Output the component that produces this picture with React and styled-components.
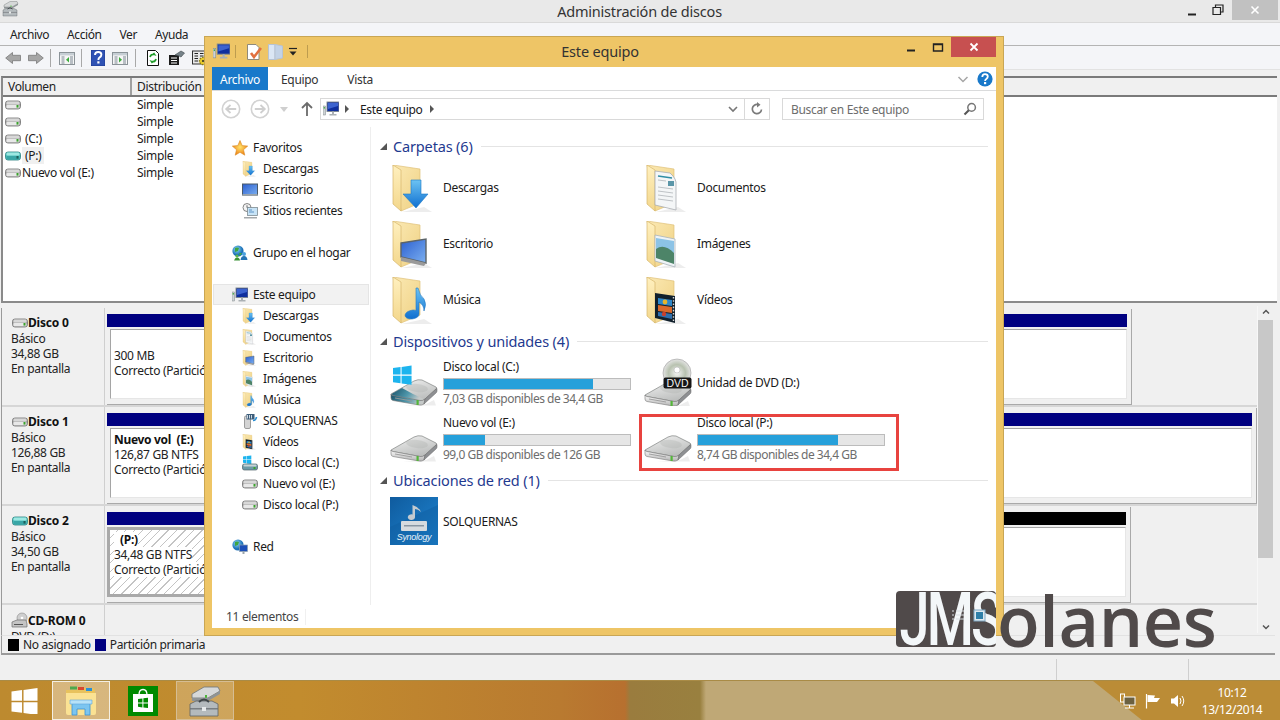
import React from 'react';
import styled, { createGlobalStyle } from 'styled-components';

const FONT = `"Noto Sans", "Open Sans", "Liberation Sans", sans-serif`;

const Global = createGlobalStyle`
  html, body { margin: 0; padding: 0; background: #f0f0f0; }
  body { font-family: ${FONT}; font-size: 12px; color: #1a1a1a; letter-spacing: -0.32px; }
  *, *::before, *::after { box-sizing: border-box; }
`;

const Screen = styled.div`
  position: relative; width: 1280px; height: 720px; overflow: hidden;
  display: flex; flex-direction: column;
`;
const HiddenSvg = styled.svg`position: absolute; width: 0; height: 0;`;

/* ---------- Disk management window ---------- */
const Mmc = styled.div`height: 680px; display: flex; flex-direction: column; background: #f0f0f0;`;
const TitleBar = styled.div`
  position: relative; height: 23px; flex: none; background: #e9e9e9; border-bottom: 1px solid #d9d9d9;
  display: flex; align-items: flex-start; padding-left: 2px;
`;
const TitleText = styled.div`
  flex: 1; text-align: center; font-size: 14.5px; line-height: 23px; color: #333; padding-left: 80px; letter-spacing: -0.2px;
`;
const WinButtons = styled.div`display: flex; align-items: flex-start; height: 21px; padding-right: 2px;`;
const WinBtn = styled.div`
  width: ${p => p.$w || 24}px; height: ${p => p.$h || 20}px; display: flex; align-items: center; justify-content: center;
  background: ${p => p.$bg || 'transparent'};
`;
const MenuBar = styled.div`
  height: 23px; flex: none; background: #f4f5f8; border-bottom: 1px solid #b4b4b4;
  display: flex; align-items: center; padding-left: 10px; gap: 18px; font-size: 12px; color: #222; letter-spacing: -0.42px;
`;
const ToolBar = styled.div`
  height: 24px; flex: none; background: #f4f5f8; border-bottom: 1px solid #e2e2e2;
  display: flex; align-items: center; padding-left: 5px; gap: 7px;
`;
const ToolSep = styled.div`width: 1px; height: 18px; background: #a8a8a8; margin: 0 ${p => p.$r}px 0 ${p => p.$l}px;`;
const Gap = styled.div`height: 6px; flex: none;`;

const VolumeList = styled.div`
  height: 227px; flex: none; margin: 0 3px 0 1px; background: #fff;
  border-top: 2px solid #7a7a7a; border-left: 2px solid #8a8a8a; border-bottom: 2px solid #8a8a8a;
  display: flex; flex-direction: column; overflow: hidden;
`;
const VolHeader = styled.div`
  height: 19px; flex: none; display: flex; background: #f0f0f0; border-bottom: 2px solid #7a7a7a; line-height: 18px; color: #222;
`;
const VolHeadCell = styled.div`
  width: ${p => p.$w}px; padding-left: 5px; border-right: ${p => (p.$last ? 'none' : '2px solid #a0a0a0')};
`;
const VolBody = styled.div`margin-top: -1px;`;
const VolRow = styled.div`height: 17px; display: flex; align-items: center; color: #1a1a1a;`;
const VolName = styled.div`
  width: 134px; padding-left: 2px; display: flex; align-items: center; gap: 1px; flex: none;
`;
const VolLabel = styled.span`
  padding: 0 ${p => p.$pad}px; line-height: 17px; background: ${p => (p.$sel ? '#f0f0f0' : 'transparent')};
`;

const DiskPane = styled.div`
  flex: 1; min-height: 0; display: flex; padding-top: 5px; overflow: hidden; background: #f0f0f0;
  margin-left: 1px;
`;
const DiskRows = styled.div`flex: 1; min-width: 0; overflow: hidden; border-left: 1px solid #9a9a9a;`;
const DiskRow = styled.div`
  height: ${p => p.$h || 99}px; display: flex; border-bottom: 2px solid #d6d6d6;
`;
const DiskInfo = styled.div`
  width: 103px; flex: none; padding: 7px 0 0 9px; line-height: 15px; color: #222; border-right: 1px solid #cfcfcf; position: relative;
`;
const DiskName = styled.div`
  display: flex; align-items: center; font-weight: 700; padding-left: 1px; color: #111; line-height: 16px; letter-spacing: -0.2px;
`;
const DiskArea = styled.div`flex: 1; min-width: 0; padding: 1px 0 0 2px; background: #f0f0f0;`;
const DiskCard = styled.div`
  display: flex; width: ${p => p.$w}px; height: 96px; padding: 5px 4px 5px 0;
  border-right: 1px solid #a9a9a9; border-bottom: 1px solid #a9a9a9;
`;
const Partition = styled.div`flex: ${p => p.$grow || 1} 1 0; min-width: 0; display: flex; flex-direction: column; position: relative;`;
const PartBar = styled.div`height: 13px; flex: none; background: ${p => p.$c};`;
const PartBody = styled.div`
  flex: 1; margin: 2px 0 0 ${p => (p.$sel ? 0 : 3)}px; padding: ${p => (p.$sel ? 2 : 3)}px 0 0 ${p => (p.$sel ? 4 : 3)}px;
  overflow: hidden; white-space: pre; line-height: 15px; color: #222;
  border: ${p => (p.$sel ? '3px solid #a9a9a9' : '1px solid #a5a5a5')};
  border-right-color: ${p => (p.$sel ? '#a9a9a9' : '#e6e6e6')};
  border-bottom-color: ${p => (p.$sel ? '#a9a9a9' : '#e6e6e6')};
  background: ${p => (p.$sel ? 'repeating-linear-gradient(135deg, #fff 0 5px, #c4c4c4 5px 6px)' : '#fff')};
`;
const PartLine = styled.div`
  height: 15px; width: fit-content; background: ${p => (p.$sel ? '#fff' : 'transparent')};
  font-weight: ${p => (p.$bold ? 700 : 400)}; padding-left: ${p => p.$indent || 0}px; color: ${p => (p.$bold ? '#111' : '#222')};
`;
const ScrollBar = styled.div`
  width: 23px; flex: none; display: flex; flex-direction: column; align-items: flex-start; margin: -2px 0 2px; padding-right: 6px;
  border-left: 1px solid #f7f7f7;
`;
const ScrollArrow = styled.div`height: 12px; width: 16px; display: flex; align-items: center; justify-content: center; flex: none;`;
const ScrollThumb = styled.div`height: 238px; width: 15px; background: #c8c8c8; margin-top: 2px; flex: none;`;
const ScrollFill = styled.div`flex: 1;`;

const Legend = styled.div`
  height: 20px; flex: none; margin: 0 5px 0 1px; display: flex; align-items: center; padding: 0 0 0 6px; gap: 4px;
  border-left: 1px solid #9a9a9a; border-top: 1px solid #e2e2e2; border-bottom: 2px solid #9a9a9a; color: #222;
`;
const Swatch = styled.div`width: 11px; height: 12px; background: ${p => p.$c};`;
const StatusBar = styled.div`height: 25px; flex: none; display: flex; padding: 4px 0 0 0; justify-content: flex-end;`;
const StatusCell = styled.div`width: ${p => p.$w}px; border-left: 1px solid #cfcfcf;`;

/* ---------- Taskbar ---------- */
const Taskbar = styled.div`
  height: 40px; flex: none; position: relative; display: flex; align-items: center;
  background: linear-gradient(90deg, #bd8a2f 0, #c28c2e 300px, #b97a30 560px, #b7702f 625px, #9a7c3e 630px, #99803f 700px, #bfa876 706px, #bfa876 1280px);
  border-top: 1px solid #a98b46;
  &::before {
    content: ''; position: absolute; inset: 0; background: #bb8c36;
    clip-path: polygon(1093px 0, 1280px 0, 1280px 40px, 1143px 40px);
  }
`;
const StartSlot = styled.div`width: 52px; height: 100%; display: flex; align-items: center; justify-content: center; padding-right: 3px;`;
const TaskBtn = styled.div`
  width: 58px; height: 39px; display: flex; align-items: center; justify-content: center;
  background: ${p => (p.$active ? 'rgba(255,255,255,0.38)' : 'rgba(255,255,255,0.22)')};
  border: 1px solid ${p => (p.$active ? '#f4efe3' : '#d6bd93')};
`;
const StoreSlot = styled.div`width: 66px; display: flex; align-items: center; justify-content: center;`;
const Tray = styled.div`
  position: relative; margin-left: auto; display: flex; align-items: center; height: 100%; gap: 9px; padding-right: 6px;
`;
const Clock = styled.div`
  width: 84px; text-align: center; color: #fff; font-size: 12px; line-height: 17px; margin-left: -5px;
`;

/* ---------- Explorer window ---------- */
const Explorer = styled.div`
  position: absolute; left: 204px; top: 36px; width: 800px; height: 600px; display: flex; flex-direction: column;
  background: #eec566; border: 1px solid #c9a654; padding: 0 7px 7px;
`;
const ExTitle = styled.div`height: 30px; flex: none; display: flex; align-items: flex-start; position: relative;`;
const Qat = styled.div`display: flex; align-items: center; height: 29px; padding-left: 1px; width: 300px;`;
const QatSlot = styled.div`display: flex; flex: none; margin-left: ${p => p.$ml || 0}px;`;
const QatSep = styled.div`width: 1px; height: 13px; background: #bd9c4f; flex: none; margin-left: ${p => p.$ml}px;`;
const ExTitleText = styled.div`
  position: absolute; left: 0; right: 0; text-align: center; font-size: 14.5px; line-height: 29px; color: #333; letter-spacing: -0.2px; padding-right: 8px;
`;
const ExBtns = styled.div`margin-left: auto; display: flex; position: relative; align-items: flex-start;`;
const ExInner = styled.div`flex: 1; min-height: 0; background: #fff; display: flex; flex-direction: column;`;
const Ribbon = styled.div`
  height: 24px; flex: none; display: flex; border-bottom: 1px solid #dadbdc; align-items: stretch; padding-right: 3px;
`;
const RibbonFile = styled.div`
  width: 56px; background: #1979ca; color: #fff; display: flex; align-items: center; justify-content: center; font-size: 12px; height: 23px; padding-top: 1px;
`;
const RibbonTab = styled.div`
  display: flex; align-items: center; color: #333; margin-left: ${p => p.$ml}px; font-size: 12px; padding-top: 1px;
`;
const RibbonRight = styled.div`margin-left: auto; display: flex; align-items: center; gap: 8px;`;
const AddressRow = styled.div`height: 36px; flex: none; display: flex; align-items: center; padding: 0 12px 0 9px;`;
const NavCircle = styled.div`width: 20px; height: 20px; margin-right: ${p => p.$mr}px; display: flex;`;
const NavCaret = styled.div`
  width: 0; height: 0; border-left: 4px solid transparent; border-right: 4px solid transparent; border-top: 5px solid #cfcfcf; margin: 1px 11px 0 0;
`;
const UpArrow = styled.div`width: 16px; height: 16px; margin-right: 5px; display: flex;`;
const AddressBox = styled.div`
  width: 450px; height: 22px; border: 1px solid #d9d9d9; display: flex; align-items: center; margin-right: 12px;
`;
const Crumb = styled.div`flex: 1; display: flex; align-items: center; padding-left: 2px; color: #1a1a1a; font-size: 12px;`;
const CrumbArrow = styled.div`
  width: 0; height: 0; border-top: 4px solid transparent; border-bottom: 4px solid transparent; border-left: 4px solid ${p => p.$c || '#555'};
  margin: ${p => p.$m};
`;
const AddrEnd = styled.div`
  width: ${p => p.$w}px; height: 100%; display: flex; align-items: center; justify-content: center; border-left: ${p => (p.$line ? '1px solid #d9d9d9' : 'none')};
`;
const SearchBox = styled.div`
  flex: 1; height: 22px; border: 1px solid #d9d9d9; display: flex; align-items: center; justify-content: space-between;
  padding: 0 6px 0 8px; color: #6d6d6d; font-size: 12px;
`;
const ExBody = styled.div`flex: 1; min-height: 0; display: flex;`;
const NavPane = styled.div`
  width: 159px; flex: none; padding: 10px 1px 0 1px; border-right: 1px solid #eeeeee; margin-bottom: 1px;
`;
const NavGroup = styled.div`margin-bottom: 21px;`;
const NavItem = styled.div`
  height: 21px; display: flex; align-items: center; padding-left: ${p => (p.$top ? 18 : 28)}px; gap: 5px; color: #1a1a1a;
  border: 1px solid ${p => (p.$sel ? '#e5e5e5' : 'transparent')}; background: ${p => (p.$sel ? '#f2f2f2' : 'transparent')};
`;
const Content = styled.div`flex: 1; min-width: 0; padding: 9px 0 0 9px;`;
const GroupHead = styled.div`
  height: 20px; display: flex; align-items: center; margin: ${p => p.$mt || 0}px 0 ${p => p.$mb}px; padding-right: 8px;
`;
const GroupCaret = styled.div`
  width: 0; height: 0; border-style: solid; border-width: 0 0 7px 7px; border-color: transparent transparent #555 transparent; margin: 1px 6px 0 0;
`;
const GroupTitle = styled.div`font-size: 14.5px; color: #1f3a8f; letter-spacing: -0.15px; white-space: nowrap;`;
const GroupRule = styled.div`flex: 1; height: 1px; background: #e4e4e4; margin-left: 8px; margin-top: 1px;`;
const Tiles = styled.div`
  display: grid; grid-template-columns: 254px 254px; grid-auto-rows: ${p => p.$row}px; margin-left: 10px;
`;
const Tile = styled.div`
  position: relative; display: flex; align-items: ${p => (p.$center ? 'center' : 'flex-start')}; height: 48px; gap: 5px; color: #1a1a1a;
  ${p => p.$marked && `
    &::after { content: ''; position: absolute; left: -5px; top: 0; width: 260px; height: 57px; border: 3px solid #e8433f; pointer-events: none; }
  `}
`;
const TileLabel = styled.div`padding: ${p => p.$pt || 0}px 0 ${p => p.$pb || 0}px; line-height: 16px; white-space: nowrap;`;
const DriveInfo = styled.div`display: flex; flex-direction: column; padding-top: 1px; line-height: 16px;`;
const DriveBar = styled.div`
  width: 188px; height: 12px; background: #e6e6e6; border: 1px solid #bcbcbc; margin: 3px 0 1px;
`;
const DriveFill = styled.div`height: 100%; background: #26a0da;`;
const DriveSub = styled.div`color: #6d6d6d; white-space: nowrap; letter-spacing: -0.5px;`;
const ExStatus = styled.div`
  height: 22px; flex: none; display: flex; align-items: center; padding-left: 14px; color: #444;
`;
const StatusText = styled.div`width: 80px; border-right: 1px solid #f0f0f0; line-height: 16px;`;

/* ---------- Watermark ---------- */
const Watermark = styled.div`
  position: absolute; left: 896px; top: 591px; display: flex; align-items: flex-start; height: 56px;
  font-family: "Open Sans", "Noto Sans", sans-serif; letter-spacing: 0; pointer-events: none;
`;
const LogoBox = styled.div`
  position: relative; width: 100px; height: 56px; background: #504a4a; border-radius: 4px; overflow: hidden; flex: none;
`;
const LogoLetters = styled.div`
  font-family: Roboto, "Liberation Sans", sans-serif; color: #f3f7f9; font-size: 75px; line-height: 56px; height: 56px; font-weight: 500;
  letter-spacing: -4px; padding-left: 5px; white-space: nowrap; transform: scaleX(0.72); transform-origin: 0 50%; width: 140px;
`;
const LogoIcons = styled.svg`position: absolute; left: 55px; top: 18px;`;
const LogoRest = styled.div`
  color: #504a4a; font-size: 70px; line-height: 58px; font-weight: 600; margin-left: 1px; letter-spacing: -0.4px;
`;

/* ---------- Icons ---------- */
const Gradients = () => (
  <HiddenSvg>
    <defs>
      <linearGradient id="gTop" x1="0" y1="0" x2="0.5" y2="1"><stop offset="0" stopColor="#f2f2f2" /><stop offset="1" stopColor="#bdbfbe" /></linearGradient>
      <linearGradient id="gFront" x1="0" y1="0" x2="0" y2="1"><stop offset="0" stopColor="#fcfcfc" /><stop offset="1" stopColor="#b4b4b4" /></linearGradient>
      <linearGradient id="gOs" x1="0" y1="0" x2="1" y2="0.3"><stop offset="0" stopColor="#174f66" /><stop offset="0.6" stopColor="#4f97ab" /><stop offset="1" stopColor="#c5c9c8" /></linearGradient>
      <linearGradient id="gBack" x1="0" y1="0" x2="1" y2="1"><stop offset="0" stopColor="#fbe9b4" /><stop offset="1" stopColor="#efd183" /></linearGradient>
      <linearGradient id="gFlap" x1="0" y1="0" x2="0" y2="1"><stop offset="0" stopColor="#fff0bf" /><stop offset="1" stopColor="#f3d78c" /></linearGradient>
      <linearGradient id="gBlue" x1="0" y1="0" x2="0" y2="1"><stop offset="0" stopColor="#6cc3f3" /><stop offset="1" stopColor="#0f6fd0" /></linearGradient>
      <linearGradient id="gScreen" x1="0" y1="0" x2="1" y2="1"><stop offset="0" stopColor="#2b5fd0" /><stop offset="1" stopColor="#7cb0f0" /></linearGradient>
      <linearGradient id="gSyn" x1="0" y1="0" x2="1" y2="1"><stop offset="0" stopColor="#0f5b9e" /><stop offset="1" stopColor="#1f86d2" /></linearGradient>
      <radialGradient id="gDisc"><stop offset="0" stopColor="#f6f6f6" /><stop offset="0.6" stopColor="#b8c2b0" /><stop offset="1" stopColor="#e4e4e4" /></radialGradient>
      <radialGradient id="gGlobe" cx="0.4" cy="0.35"><stop offset="0" stopColor="#8fdcf5" /><stop offset="1" stopColor="#1c70b8" /></radialGradient>
      <radialGradient id="gStar" cx="0.5" cy="0.45"><stop offset="0" stopColor="#ffe36b" /><stop offset="1" stopColor="#f08a1d" /></radialGradient>
    </defs>
  </HiddenSvg>
);

const Overlay = ({ kind }) => {
  switch (kind) {
    case 'down':
      return <path d="M21 15 H31 V29 H38 L26 43 L13 29 H21 Z" fill="url(#gBlue)" stroke="#1b78c8" strokeWidth="0.6" />;
    case 'doc':
      return (
        <g>
          <path d="M11 6 L26 8 Q33 14 32 20 L32 45 L11 40 Z" fill="#f4f6f7" stroke="#a9adb2" strokeWidth="0.8" />
          <path d="M14 11 L28 13" stroke="#2f8da5" strokeWidth="1.6" />
          <path d="M14 15 L22 16 M14 22 L29 24 M14 26 L29 28 M14 30 L29 32 M14 34 L29 36" stroke="#b8bcc0" strokeWidth="0.9" />
          <rect x="24" y="16" width="6" height="5" fill="#5b96a8" />
        </g>
      );
    case 'screen':
      return (
        <g>
          <path d="M11 22 L36 18 V42 L11 36 Z" fill="url(#gScreen)" stroke="#5c6468" strokeWidth="1.4" />
          <path d="M11 36 L36 42 L34 45 L11 40 Z" fill="#9a9a9a" />
        </g>
      );
    case 'pic':
      return (
        <g>
          <path d="M11 14 L31 18 V46 L11 40 Z" fill="#eef3f6" stroke="#aab4bb" strokeWidth="0.8" />
          <path d="M12 17 L30 20 V32 L12 28 Z" fill="#8cc3e6" />
          <path d="M12 28 Q20 22 30 32 V43 L12 37 Z" fill="#4d8468" />
        </g>
      );
    case 'note':
      return (
        <g fill="url(#gBlue)" stroke="#2379c4" strokeWidth="0.6">
          <path d="M26 11 L28 11 Q30 19 34 22 Q37 27 34 34 Q34 28 29 25 L29 37 Q29 41 22 42 Q15 42 15 38 Q16 34 23 33 Q25 33 26 33.5 Z" />
        </g>
      );
    case 'film':
      return (
        <g>
          <path d="M11 16 L31 19 V46 L11 41 Z" fill="#11202c" />
          <path d="M14 21 L28 23 V29 L14 27 Z" fill="#2e87c9" />
          <path d="M14 28 L28 30 V36 L14 34 Z" fill="#d9692b" />
          <path d="M14 35 L28 37 V42 L14 39 Z" fill="#2f6fae" />
          <circle cx="21" cy="25" r="2.4" fill="#e6b52c" />
          <circle cx="20" cy="37" r="2.2" fill="#c9402f" />
          <path d="M29.5 20 V45" stroke="#d7d7d7" strokeWidth="1.4" strokeDasharray="1.6 1.6" />
        </g>
      );
    default:
      return null;
  }
};

const Folder = ({ size = 48, kind }) => (
  <svg width={size} height={size} viewBox="0 0 48 48" style={{ flex: 'none' }}>
    <path d="M12 47 L34 42 L42 47 Z" fill="#d8d8d8" opacity="0.45" />
    <path d="M3 0 L30 4 V38 L11 46 Z" fill="url(#gBack)" stroke="#e0c27a" strokeWidth="0.7" />
    <path d="M3 0 L11 5 V46 L3 39 Z" fill="url(#gFlap)" stroke="#d6b66c" strokeWidth="0.7" />
    <Overlay kind={kind} />
  </svg>
);

const WinLogo = ({ x, y, s, c = '#1db4ee' }) => (
  <g transform={`translate(${x} ${y}) scale(${s})`} fill={c}>
    <path d="M0 1.4 L6.5 .5 V7 H0 Z M7.4 .4 L16 -.8 V7 H7.4 Z M0 8 H6.5 V14.5 L0 13.6 Z M7.4 8 H16 V15.8 L7.4 14.6 Z" />
  </g>
);

const DriveBody = ({ os }) => (
  <g>
    <path d="M13 47.5 L36 46 L44 42 L46 47.5 Z" fill="#dcdcdc" opacity="0.5" />
    <path d="M1 36 L24 23 Q28 21 32 22 L46 29 Q47.5 30 46 31 L35 41 Q33 43 30 42.5 L3 37.5 Q1 37 1 36 Z" fill="url(#gTop)" stroke="#6f7271" strokeWidth="0.6" />
    <ellipse cx="27" cy="30" rx="11" ry="4" fill="#a9abaa" opacity="0.3" transform="rotate(6 27 30)" />
    {os && <path d="M1.5 36 L12 30 Q22 36 34 41 Q32 42.6 30 42.3 L3 37.4 Z" fill="url(#gOs)" />}
    <path d="M1 36 L1 40 Q1 42 3 42.5 L29 47 Q32 47.5 34 46 L35 41 Q33 43 30 42.5 L3 37.5 Q1 37 1 36 Z" fill={os ? 'url(#gOs)' : 'url(#gFront)'} stroke="#777" strokeWidth="0.6" />
    <path d="M35 41 L34 46 L46 35 Q47 34 47 33 V30.5 Q47.2 30 46 31 Z" fill="#8e9093" stroke="#666" strokeWidth="0.5" />
    <path d="M5 40 L22 43" stroke="#9a9a9a" strokeWidth="0.9" />
    <rect x="26.5" y="42" width="2.2" height="5" fill="#54b53a" />
  </g>
);

const Drive = ({ os }) => (
  <svg width="48" height="48" viewBox="0 0 48 48" style={{ flex: 'none' }}>
    <DriveBody os={os} />
    {os && <WinLogo x={3} y={8.5} s={1.16} />}
  </svg>
);

const DvdDrive = () => (
  <svg width="48" height="48" viewBox="0 0 48 48" style={{ flex: 'none' }}>
    <g transform="translate(0 1)"><DriveBody /></g>
    <circle cx="33" cy="15" r="14" fill="url(#gDisc)" stroke="#9c9c9c" strokeWidth="0.6" />
    <circle cx="33" cy="12" r="3" fill="#fff" stroke="#aaa" strokeWidth="0.5" />
    <rect x="19.5" y="19.5" width="28" height="11" rx="2" fill="#161616" />
    <text x="33.5" y="29" textAnchor="middle" fontFamily="Liberation Sans, sans-serif" fontSize="10.5" fill="#f4f4f4" letterSpacing="0">DVD</text>
  </svg>
);

const Synology = () => (
  <svg width="48" height="48" viewBox="0 0 48 48" style={{ flex: 'none' }}>
    <rect width="48" height="48" fill="url(#gSyn)" />
    <path d="M0 48 V30 L48 8 V48 Z" fill="#0f5d9f" opacity="0.45" />
    <path d="M25 8 V20 A3.6 2.8 0 1 1 22.5 17.5 V8 Q29 10 31 15 Q28 12 25 12" fill="#c3cad0" />
    <rect x="11" y="24" width="26" height="10" rx="1" fill="#d6dbdf" />
    <rect x="14" y="28" width="20" height="1.5" fill="#8997a3" />
    <text x="24" y="43" textAnchor="middle" fontFamily="Liberation Sans, sans-serif" fontSize="9" fontStyle="italic" fill="#e8f2f9" letterSpacing="-0.3">Synology</text>
  </svg>
);

const SmallDrive = ({ teal, w = 16 }) => (
  <svg width={w} height="10" viewBox="0 0 16 10" style={{ flex: 'none' }}>
    <rect x="0.5" y="1" width="15" height="8" rx="2.4" fill={teal ? '#4fc1bd' : '#a8a8a8'} stroke={teal ? '#277d7d' : '#6e6e6e'} strokeWidth="0.8" />
    <rect x="1.5" y="1.6" width="13" height="2.8" rx="1.2" fill={teal ? '#9de8e2' : '#d8d8d8'} />
    <rect x="1.4" y="5" width="13" height="3.3" rx="1" fill={teal ? '#39a6a6' : '#e8e8e8'} />
    <rect x="11.5" y="5" width="2" height="2.6" fill={teal ? '#1d5e5a' : '#3aa12c'} />
  </svg>
);

const CdSmall = () => (
  <svg width="17" height="17" viewBox="0 0 17 17" style={{ flex: 'none', marginLeft: -1 }}>
    <circle cx="11" cy="6" r="5" fill="#cfcfcf" stroke="#8a8a8a" strokeWidth="0.6" />
    <circle cx="11" cy="6" r="1.3" fill="#fff" />
    <path d="M1 10 L6 8 H15 L16 12 V15 H1 Z" fill="#c4c4c4" stroke="#6e6e6e" strokeWidth="0.7" />
    <path d="M3 12.5 H12" stroke="#555" strokeWidth="1" />
  </svg>
);

const Pc = ({ size = 16 }) => (
  <svg width={size} height={size} viewBox="0 0 16 16" style={{ flex: 'none' }}>
    <rect x="0" y="5" width="2.6" height="9" fill="#cfd4d6" stroke="#7f8688" strokeWidth="0.5" />
    <rect x="0.7" y="6" width="1.2" height="1.6" fill="#45b045" />
    <rect x="4" y="1" width="12" height="9.5" fill="#0f2f9e" stroke="#7c868e" strokeWidth="0.9" />
    <path d="M5 2 H15 V5 L5 8 Z" fill="#3c63cf" />
    <path d="M9 10.5 H11 V13 H13.5 V14.5 H6.5 V13 H9 Z" fill="#aab0b4" />
  </svg>
);

const GlobeNet = ({ people }) => (
  <svg width="16" height="16" viewBox="0 0 16 16" style={{ flex: 'none' }}>
    <circle cx="6" cy="6" r="5.6" fill="url(#gGlobe)" />
    <path d="M3 3 Q5 2 7 3 L6 6 L3 7 Z M7 8 L10 8 L8 11 Z" fill="#3fa53f" />
    {people ? (
      <g><circle cx="12" cy="9" r="2" fill="#4aa0de" /><path d="M8.5 15 Q9 11 12 11 Q15 11 15.5 15 Z" fill="#2373b5" /><circle cx="5" cy="11" r="1.6" fill="#5cb64a" /><path d="M2 15.5 Q3 12.5 5 12.5 Q7.5 12.5 8 15.5 Z" fill="#3b9236" /></g>
    ) : (
      <g><rect x="7.5" y="6" width="8" height="6.5" fill="#1c4fb8" stroke="#8da0ae" strokeWidth="0.7" /><path d="M10.5 12.5 H12.5 V15 H10.5 Z" fill="#9aa4aa" /></g>
    )}
  </svg>
);

const Star = () => (
  <svg width="16" height="16" viewBox="0 0 16 16" style={{ flex: 'none' }}>
    <path d="M8 .5 L10.2 5.6 L15.7 6.1 L11.5 9.7 L12.8 15.2 L8 12.3 L3.2 15.2 L4.5 9.7 L.3 6.1 L5.8 5.6 Z" fill="url(#gStar)" stroke="#d98a25" strokeWidth="0.6" />
  </svg>
);

const Desktop16 = () => (
  <svg width="16" height="16" viewBox="0 0 16 16" style={{ flex: 'none' }}>
    <rect x="0.5" y="2" width="15" height="11" fill="url(#gScreen)" stroke="#4a5a6a" strokeWidth="1" />
    <rect x="0.5" y="12" width="15" height="2" fill="#9aa3aa" />
  </svg>
);

const Recent = () => (
  <svg width="16" height="16" viewBox="0 0 16 16" style={{ flex: 'none' }}>
    <circle cx="5" cy="4.5" r="4" fill="#f4f4f4" stroke="#777" strokeWidth="0.9" />
    <path d="M5 2.3 V4.7 H7" stroke="#444" strokeWidth="0.8" fill="none" />
    <rect x="5.5" y="4.5" width="10" height="8" fill="#c7e3f6" stroke="#7d8a92" strokeWidth="0.8" />
    <path d="M7 7 H10 M7 9 H12" stroke="#5c92c6" strokeWidth="1" />
    <path d="M2 14 H15 V15.5 H2 Z" fill="#a4a8ab" />
  </svg>
);

const NasSmall = () => (
  <svg width="16" height="16" viewBox="0 0 16 16" style={{ flex: 'none' }}>
    <rect x="2.5" y="3" width="6" height="12.5" rx="1.4" fill="#d4d4d4" stroke="#7c7c7c" strokeWidth="0.7" />
    <rect x="4.5" y="1" width="8" height="5.5" fill="#3d5d7a" />
    <path d="M5.5 2 V5.5 M7.5 2 V5.5 M9.5 2 V5.5" stroke="#dfe8ef" strokeWidth="0.9" />
    <path d="M11 7.5 Q14 7.5 14.5 4" stroke="#2b8fd4" strokeWidth="1.6" fill="none" />
  </svg>
);

const DriveC16 = () => (
  <svg width="16" height="16" viewBox="0 0 16 16" style={{ flex: 'none' }}>
    <WinLogo x={1} y={0.8} s={0.52} />
    <rect x="0.5" y="9" width="15" height="6" rx="1.8" fill="#6d9aa6" stroke="#4f6168" strokeWidth="0.7" />
    <rect x="1.5" y="9.6" width="13" height="2" rx="0.8" fill="#c8d2d4" />
    <rect x="11.5" y="12" width="2" height="2" fill="#3aa12c" />
  </svg>
);

const Line = ({ d, c = '#333', w = 1, s = 12 }) => (
  <svg width={s} height={s} viewBox="0 0 12 12" style={{ flex: 'none' }}>
    <path d={d} stroke={c} strokeWidth={w} fill="none" />
  </svg>
);

const NavArrow = ({ right }) => (
  <svg width="20" height="20" viewBox="0 0 20 20">
    <circle cx="10" cy="10" r="8.7" fill="none" stroke="#d2d2d2" strokeWidth="1.6" />
    <path d={right ? 'M4.8 10 H14.5 M10.5 6 L14.8 10 L10.5 14' : 'M15.2 10 H5.5 M9.5 6 L5.2 10 L9.5 14'} fill="none" stroke="#cfcfcf" strokeWidth="1.8" />
  </svg>
);

const ToolArrow = ({ right }) => (
  <svg width="16" height="16" viewBox="0 0 16 16" style={{ flex: 'none', transform: right ? 'scaleX(-1)' : 'none' }}>
    <path d="M.7 8 L7.5 2.5 V5.3 H15.5 V10.7 H7.5 V13.5 Z" fill="#a6a6a6" stroke="#7a7a7a" strokeWidth="0.8" />
  </svg>
);

const PanelTool = ({ right }) => (
  <svg width="16" height="16" viewBox="0 0 16 16" style={{ flex: 'none' }}>
    <rect x="0.5" y="2.5" width="15" height="12" fill="#f6f6f6" stroke="#8b9398" />
    <rect x="1" y="3" width="14" height="2.4" fill="#c6ced4" />
    <path d="M2.5 7 H5.5 M2.5 9 H5.5 M2.5 11 H5.5 M2.5 13 H5.5 M11 7 H14 M11 9 H14 M11 11 H14 M11 13 H14" stroke="#6d7c88" strokeWidth="0.9" />
    <path d={right ? 'M7 7 L10 9.7 L7 12.4 Z' : 'M10 7 L7 9.7 L10 12.4 Z'} fill="#3cab3c" />
  </svg>
);

const HelpTool = () => (
  <svg width="14" height="16" viewBox="0 0 14 16" style={{ flex: 'none' }}>
    <rect width="14" height="16" fill="#2f52b4" stroke="#18307e" strokeWidth="0.6" />
    <path d="M4 5 Q4 2 7.2 2 Q10.4 2 10.4 4.8 Q10.4 6.5 8.4 7.6 Q7.4 8.2 7.4 10" fill="none" stroke="#fff" strokeWidth="1.9" />
    <rect x="6.3" y="11.3" width="2.2" height="2.2" fill="#fff" />
  </svg>
);

const RefreshTool = () => (
  <svg width="16" height="16" viewBox="0 0 16 16" style={{ flex: 'none' }}>
    <path d="M2.5 .5 H10.5 L13.5 3.5 V15.5 H2.5 Z" fill="#fff" stroke="#111" />
    <path d="M5 7 Q6 3.5 9.5 4.5 L8.5 3 M11 9 Q10 12.5 6.5 11.5 L7.5 13" stroke="#1f9c2a" strokeWidth="1.7" fill="none" />
  </svg>
);

const PropsTool = () => (
  <svg width="17" height="16" viewBox="0 0 17 16" style={{ flex: 'none' }}>
    <path d="M1 5 H11 V15 H1 Z" fill="#1b1b1b" />
    <path d="M3 8 H9 M3 10.5 H9 M3 13 H9" stroke="#fff" strokeWidth="1" />
    <path d="M7 5 L13 1 L16.5 3 L13 7 L11 6 Z" fill="#77838a" stroke="#3c4448" strokeWidth="0.6" />
  </svg>
);

const GearTool = () => (
  <svg width="16" height="16" viewBox="0 0 16 16" style={{ flex: 'none' }}>
    <rect x="0.5" y="1" width="13" height="13" fill="#e9e9e9" stroke="#333" />
    <path d="M2.5 3.5 H6 M8 3.5 H11.5 M2.5 6 H6 M2.5 8.5 H6 M2.5 11 H6 M8 6 H11.5" stroke="#222" strokeWidth="1.1" />
    <circle cx="11" cy="11" r="3.6" fill="#e6c92a" stroke="#8a7a12" strokeWidth="1.2" strokeDasharray="1.6 1" />
    <circle cx="11" cy="11" r="1" fill="#2a2a2a" />
  </svg>
);

const ToolboxDrive = ({ size = 17 }) => (
  <svg width={size} height={size} viewBox="0 0 17 17" style={{ flex: 'none' }}>
    <path d="M2 5 L8 1.5 H15 L16 3.5 L10 7 H2 Z" fill="#d6d8d8" stroke="#6f7375" strokeWidth="0.4" />
    <path d="M2 5 V7 H10 L16 3.5 V5 L10 8.5 H2 Z" fill="#8f9496" />
    <rect x="8.5" y="5.5" width="1" height="1.4" fill="#49b43a" />
    <path d="M1 10 L4 8.5 H12 L15 10 V16 H1 Z" fill="#b4babd" stroke="#5e6366" strokeWidth="0.4" />
    <path d="M5.5 9 Q8 6.5 10.5 9" stroke="#3f4548" strokeWidth="0.9" fill="none" />
    <path d="M1 12.4 H15" stroke="#6b7073" strokeWidth="0.6" />
    <rect x="7" y="11.5" width="2" height="2" fill="#e6e9ea" />
  </svg>
);

const TaskFolder = () => (
  <svg width="32" height="32" viewBox="0 0 32 32">
    <path d="M1 5 H12 L14 3 H28 Q30 3 30 5 V27 H1 Z" fill="#e8c25d" />
    <rect x="5" y="1.5" width="7" height="3" fill="#4da94d" />
    <rect x="13" y="2" width="6" height="3" fill="#d9482f" />
    <rect x="21" y="3" width="6" height="3" fill="#2a8fd6" />
    <path d="M1 8 H31 V28 Q31 30 29 30 H3 Q1 30 1 28 Z" fill="#fbe293" />
    <path d="M7 16 H25 V30 H20 V24 H12 V30 H7 Z" fill="#7cc5f0" stroke="#3b92d4" strokeWidth="0.8" />
    <path d="M5 15 H27 V19 H5 Z" fill="#b7e2f8" stroke="#5aa6de" strokeWidth="0.6" />
  </svg>
);

const Store = () => (
  <svg width="30" height="30" viewBox="0 0 30 30">
    <rect width="30" height="30" fill="#008a00" />
    <path d="M11 9 Q11 3.5 15 3.5 Q19 3.5 19 9" fill="none" stroke="#fff" strokeWidth="1.3" />
    <path d="M5 8 H25 V26 H5 Z" fill="#fff" />
    <path d="M10 13 L14.4 12.4 V16.4 H10 Z M15.4 12.3 L20 11.7 V16.4 H15.4 Z M10 17.4 H14.4 V21.4 L10 20.8 Z M15.4 17.4 H20 V22.1 L15.4 21.5 Z" fill="#008a00" />
  </svg>
);

const Mini = ({ w = 16, h = 16, children }) => (
  <svg width={w} height={h} viewBox={`0 0 ${w} ${h}`} style={{ flex: 'none' }}>{children}</svg>
);

const NAV_FAV = [
  ['Descargas', <Folder size={16} kind="down" />],
  ['Escritorio', <Desktop16 />],
  ['Sitios recientes', <Recent />],
];
const NAV_PC = [
  ['Descargas', <Folder size={16} kind="down" />],
  ['Documentos', <Folder size={16} kind="doc" />],
  ['Escritorio', <Folder size={16} kind="screen" />],
  ['Imágenes', <Folder size={16} kind="pic" />],
  ['Música', <Folder size={16} kind="note" />],
  ['SOLQUERNAS', <NasSmall />],
  ['Vídeos', <Folder size={16} kind="film" />],
  ['Disco local (C:)', <DriveC16 />],
  ['Nuevo vol (E:)', <SmallDrive />],
  ['Disco local (P:)', <SmallDrive />],
];
const FOLDERS = [
  ['Descargas', 'down'], ['Documentos', 'doc'],
  ['Escritorio', 'screen'], ['Imágenes', 'pic'],
  ['Música', 'note'], ['Vídeos', 'film'],
];
const VOLUMES = [
  { name: '', pad: 0 }, { name: '', pad: 0 },
  { name: '(C:)', pad: 3 },
  { name: '(P:)', pad: 3, sel: true },
  { name: 'Nuevo vol (E:)', pad: 0 },
];

function DriveTile({ name, free, pct, os, marked }) {
  return (
    <Tile $marked={marked}>
      <Drive os={os} />
      <DriveInfo>
        <span>{name}</span>
        <DriveBar><DriveFill style={{ width: `${pct}%` }} /></DriveBar>
        <DriveSub>{free}</DriveSub>
      </DriveInfo>
    </Tile>
  );
}

function Group({ title, mb, mt }) {
  return (
    <GroupHead $mb={mb} $mt={mt}>
      <GroupCaret />
      <GroupTitle>{title}</GroupTitle>
      <GroupRule />
    </GroupHead>
  );
}

export default function App() {
  return (
    <Screen>
      <Global />
      <Gradients />
      <Mmc>
        <TitleBar>
          <ToolboxDrive />
          <TitleText>Administración de discos</TitleText>
          <WinButtons>
            <WinBtn $w={24}><Line d="M2 10.5 H10" c="#222" w={2} /></WinBtn>
            <WinBtn $w={28}><Line d="M3.5 3 V1 H11 V8 H9 M1 3.5 H8.5 V10.5 H1 Z" c="#222" w={1.2} /></WinBtn>
            <WinBtn $w={46} $bg="#c1c1c1"><Line d="M2.5 2.5 L9.5 9.5 M9.5 2.5 L2.5 9.5" c="#fff" w={1.6} /></WinBtn>
          </WinButtons>
        </TitleBar>
        <MenuBar>
          <span>Archivo</span><span>Acción</span><span>Ver</span><span>Ayuda</span>
        </MenuBar>
        <ToolBar>
          <ToolArrow /><ToolArrow right />
          <ToolSep $l={-1} $r={1} />
          <PanelTool />
          <ToolSep $l={-1} $r={2} />
          <HelpTool /><PanelTool right />
          <ToolSep $l={0} $r={2} />
          <RefreshTool /><PropsTool /><GearTool />
        </ToolBar>
        <Gap />
        <VolumeList>
          <VolHeader>
            <VolHeadCell $w={129}>Volumen</VolHeadCell>
            <VolHeadCell $w={900} $last>Distribución</VolHeadCell>
          </VolHeader>
          <VolBody>
            {VOLUMES.map((v, i) => (
              <VolRow key={i}>
                <VolName>
                  <SmallDrive teal={v.sel} />
                  {v.name && <VolLabel $pad={v.pad} $sel={v.sel}>{v.name}</VolLabel>}
                </VolName>
                <span>Simple</span>
              </VolRow>
            ))}
          </VolBody>
        </VolumeList>
        <DiskPane>
          <DiskRows>
            <DiskRow>
              <DiskInfo>
                <DiskName><SmallDrive />Disco 0</DiskName>
                <div>Básico</div><div>34,88 GB</div><div>En pantalla</div>
              </DiskInfo>
              <DiskArea>
                <DiskCard $w={1025}>
                  <Partition>
                    <PartBar $c="#000080" />
                    <PartBody>
                      <PartLine />
                      <PartLine>300 MB</PartLine>
                      <PartLine>Correcto (Partición de sistema)</PartLine>
                    </PartBody>
                  </Partition>
                </DiskCard>
              </DiskArea>
            </DiskRow>
            <DiskRow>
              <DiskInfo>
                <DiskName><SmallDrive />Disco 1</DiskName>
                <div>Básico</div><div>126,88 GB</div><div>En pantalla</div>
              </DiskInfo>
              <DiskArea>
                <DiskCard $w={1150}>
                  <Partition>
                    <PartBar $c="#000080" />
                    <PartBody>
                      <PartLine $bold>Nuevo vol  (E:)</PartLine>
                      <PartLine>126,87 GB NTFS</PartLine>
                      <PartLine>Correcto (Partición primaria)</PartLine>
                    </PartBody>
                  </Partition>
                </DiskCard>
              </DiskArea>
            </DiskRow>
            <DiskRow>
              <DiskInfo>
                <DiskName><SmallDrive teal />Disco 2</DiskName>
                <div>Básico</div><div>34,50 GB</div><div>En pantalla</div>
              </DiskInfo>
              <DiskArea>
                <DiskCard $w={1024}>
                  <Partition $grow={2}>
                    <PartBar $c="#000080" />
                    <PartBody $sel>
                      <PartLine $bold $sel $indent={6}>(P:)</PartLine>
                      <PartLine $sel>34,48 GB NTFS</PartLine>
                      <PartLine $sel>Correcto (Partición primaria)</PartLine>
                    </PartBody>
                  </Partition>
                  <Partition>
                    <PartBar $c="#000" />
                    <PartBody />
                  </Partition>
                </DiskCard>
              </DiskArea>
            </DiskRow>
            <DiskRow $h={40}>
              <DiskInfo>
                <DiskName><CdSmall />CD-ROM 0</DiskName>
                <div>DVD (D:)</div>
              </DiskInfo>
              <DiskArea />
            </DiskRow>
          </DiskRows>
          <ScrollBar>
            <ScrollArrow><Line d="M3 7.5 L6 4.5 L9 7.5" c="#555" w={1.5} /></ScrollArrow>
            <ScrollThumb />
            <ScrollFill />
            <ScrollArrow><Line d="M3 4.5 L6 7.5 L9 4.5" c="#555" w={1.5} /></ScrollArrow>
          </ScrollBar>
        </DiskPane>
        <Legend>
          <Swatch $c="#000" /><span>No asignado</span>
          <Swatch $c="#000080" /><span>Partición primaria</span>
        </Legend>
        <StatusBar>
          <StatusCell $w={132} />
          <StatusCell $w={92} />
        </StatusBar>
      </Mmc>

      <Taskbar>
        <StartSlot>
          <svg width="27" height="26" viewBox="0 0 16 16"><WinLogo x={0} y={0.8} s={1} c="#fff" /></svg>
        </StartSlot>
        <TaskBtn $active><TaskFolder /></TaskBtn>
        <StoreSlot><Store /></StoreSlot>
        <TaskBtn><ToolboxDrive size={34} /></TaskBtn>
        <Tray>
          <Mini>
            <rect x="0.5" y="1" width="4" height="8" fill="none" stroke="#fff" />
            <rect x="4" y="4" width="11" height="8" fill="#6b6040" stroke="#fff" />
            <path d="M9.5 12 V15 M5 15 H14" stroke="#fff" />
          </Mini>
          <Mini>
            <path d="M1.5 1 V15.5" stroke="#fff" strokeWidth="1.2" />
            <path d="M2.5 2 L10 2.5 L9 5 L15 5 L12 9 L2.5 9 Z" fill="#fff" />
          </Mini>
          <Mini>
            <path d="M1 5.5 H4 L8 2 V14 L4 10.5 H1 Z" fill="#fff" />
            <path d="M10 5 Q12 8 10 11 M12 3 Q15.5 8 12 13" stroke="#fff" fill="none" />
          </Mini>
          <Clock><div>10:12</div><div>13/12/2014</div></Clock>
        </Tray>
      </Taskbar>

      <Explorer>
        <ExTitle>
          <ExTitleText>Este equipo</ExTitleText>
          <Qat>
            <QatSlot><Pc size={17} /></QatSlot>
            <QatSep $ml={5} />
            <QatSlot $ml={10}>
              <svg width="16" height="16" viewBox="0 0 16 16">
                <path d="M1.5 .5 H10 L13 3.5 V15.5 H1.5 Z" fill="#fff" stroke="#8f8a7b" />
                <path d="M5 9 L8 13 L15 4" stroke="#e2703f" strokeWidth="2.6" fill="none" />
              </svg>
            </QatSlot>
            <QatSlot $ml={6}>
              <svg width="15" height="16" viewBox="0 0 15 16">
                <path d="M.5 .5 H7 V15.5 H.5 Z" fill="#dbe6f4" stroke="#b7c3d2" />
                <path d="M7 .5 L14.5 2 V14 L7 15.5 Z" fill="#c3d2e6" stroke="#b7c3d2" />
              </svg>
            </QatSlot>
            <QatSlot $ml={5}>
              <svg width="10" height="10" viewBox="0 0 10 10">
                <path d="M1 1.5 H9" stroke="#222" strokeWidth="1.2" />
                <path d="M1.5 4.5 H8.5 L5 8.5 Z" fill="#222" />
              </svg>
            </QatSlot>
            <QatSep $ml={9} />
          </Qat>
          <ExBtns>
            <WinBtn $w={28}><Line d="M2 9.5 H10" c="#222" w={2} /></WinBtn>
            <WinBtn $w={26}><Line d="M1.5 3 H10.5 V10 H1.5 Z M1.5 3.5 H10.5" c="#222" w={1.4} s={12} /></WinBtn>
            <WinBtn $w={45} $bg="#c75050"><Line d="M2.5 2.5 L9.5 9.5 M9.5 2.5 L2.5 9.5" c="#fff" w={1.8} /></WinBtn>
          </ExBtns>
        </ExTitle>
        <ExInner>
          <Ribbon>
            <RibbonFile>Archivo</RibbonFile>
            <RibbonTab $ml={13}>Equipo</RibbonTab>
            <RibbonTab $ml={29}>Vista</RibbonTab>
            <RibbonRight>
              <Line d="M1.5 4 L6 8.5 L10.5 4" c="#a6a6a6" w={1.5} />
              <svg width="16" height="16" viewBox="0 0 16 16">
                <circle cx="8" cy="8" r="7.6" fill="#1979ca" />
                <path d="M5.3 6 Q5.3 3.2 8 3.2 Q10.8 3.2 10.8 5.6 Q10.8 7 9.3 7.9 Q8.1 8.6 8.1 10" fill="none" stroke="#fff" strokeWidth="1.8" />
                <rect x="7" y="11" width="2.2" height="2.2" fill="#fff" />
              </svg>
            </RibbonRight>
          </Ribbon>
          <AddressRow>
            <NavCircle $mr={9}><NavArrow /></NavCircle>
            <NavCircle $mr={10}><NavArrow right /></NavCircle>
            <NavCaret />
            <UpArrow><svg width="16" height="16" viewBox="0 0 16 16"><path d="M8 15 V2 M3 7 L8 2 L13 7" fill="none" stroke="#6b6b6b" strokeWidth="1.8" /></svg></UpArrow>
            <AddressBox>
              <Crumb>
                <Pc />
                <CrumbArrow $m="0 11px 0 6px" />
                <span>Este equipo</span>
                <CrumbArrow $m="0 0 0 8px" />
              </Crumb>
              <AddrEnd $w={22}><Line d="M2 4 L6 8 L10 4" c="#777" w={1.6} s={12} /></AddrEnd>
              <AddrEnd $w={25} $line>
                <svg width="14" height="14" viewBox="0 0 14 14">
                  <path d="M11.5 7.5 A4.6 4.6 0 1 1 8 2.6" fill="none" stroke="#7a7a7a" strokeWidth="1.7" />
                  <path d="M7 0 L10.5 2.8 L7 5.6 Z" fill="#7a7a7a" />
                </svg>
              </AddrEnd>
            </AddressBox>
            <SearchBox>
              <span>Buscar en Este equipo</span>
              <svg width="14" height="14" viewBox="0 0 14 14">
                <circle cx="8.6" cy="5.4" r="3.8" fill="none" stroke="#777" strokeWidth="1.5" />
                <path d="M5.8 8.2 L1.5 12.5" stroke="#555" strokeWidth="2" />
              </svg>
            </SearchBox>
          </AddressRow>
          <ExBody>
            <NavPane>
              <NavGroup>
                <NavItem $top><Star />Favoritos</NavItem>
                {NAV_FAV.map(([t, ic]) => <NavItem key={t}>{ic}{t}</NavItem>)}
              </NavGroup>
              <NavGroup>
                <NavItem $top><GlobeNet people />Grupo en el hogar</NavItem>
              </NavGroup>
              <NavGroup>
                <NavItem $top $sel><Pc />Este equipo</NavItem>
                {NAV_PC.map(([t, ic]) => <NavItem key={t}>{ic}{t}</NavItem>)}
              </NavGroup>
              <NavGroup>
                <NavItem $top><GlobeNet />Red</NavItem>
              </NavGroup>
            </NavPane>
            <Content>
              <Group title="Carpetas (6)" mb={9} />
              <Tiles $row={56}>
                {FOLDERS.map(([t, k]) => (
                  <Tile key={t} $center>
                    <Folder kind={k} />
                    <TileLabel $pb={2}>{t}</TileLabel>
                  </Tile>
                ))}
              </Tiles>
              <Group title="Dispositivos y unidades (4)" mb={7} mt={-2} />
              <Tiles $row={56}>
                <DriveTile name="Disco local (C:)" free="7,03 GB disponibles de 34,4 GB" pct={80} os />
                <Tile $center><DvdDrive /><TileLabel $pt={2}>Unidad de DVD (D:)</TileLabel></Tile>
                <DriveTile name="Nuevo vol (E:)" free="99,0 GB disponibles de 126 GB" pct={22} />
                <DriveTile name="Disco local (P:)" free="8,74 GB disponibles de 34,4 GB" pct={75} marked />
              </Tiles>
              <Group title="Ubicaciones de red (1)" mb={7} />
              <Tiles $row={48}>
                <Tile $center><Synology /><TileLabel $pt={2}>SOLQUERNAS</TileLabel></Tile>
              </Tiles>
            </Content>
          </ExBody>
          <ExStatus><StatusText>11 elementos</StatusText></ExStatus>
        </ExInner>
      </Explorer>

      <Watermark>
        <LogoBox>
          <LogoLetters>JMS</LogoLetters>
          <LogoIcons width="36" height="14" viewBox="0 0 36 14">
            <path d="M1 2 H3 M1 6 H3 M1 10 H3 M5 2 H13 M5 6 H13 M5 10 H13" stroke="#d7dde2" strokeWidth="1" />
            <rect x="23" y="1" width="11" height="11" fill="#dfe9ef" stroke="#7fa8c4" />
            <rect x="25" y="3" width="7" height="7" fill="#2f7fa8" />
          </LogoIcons>
        </LogoBox>
        <LogoRest>olanes</LogoRest>
      </Watermark>
    </Screen>
  );
}
